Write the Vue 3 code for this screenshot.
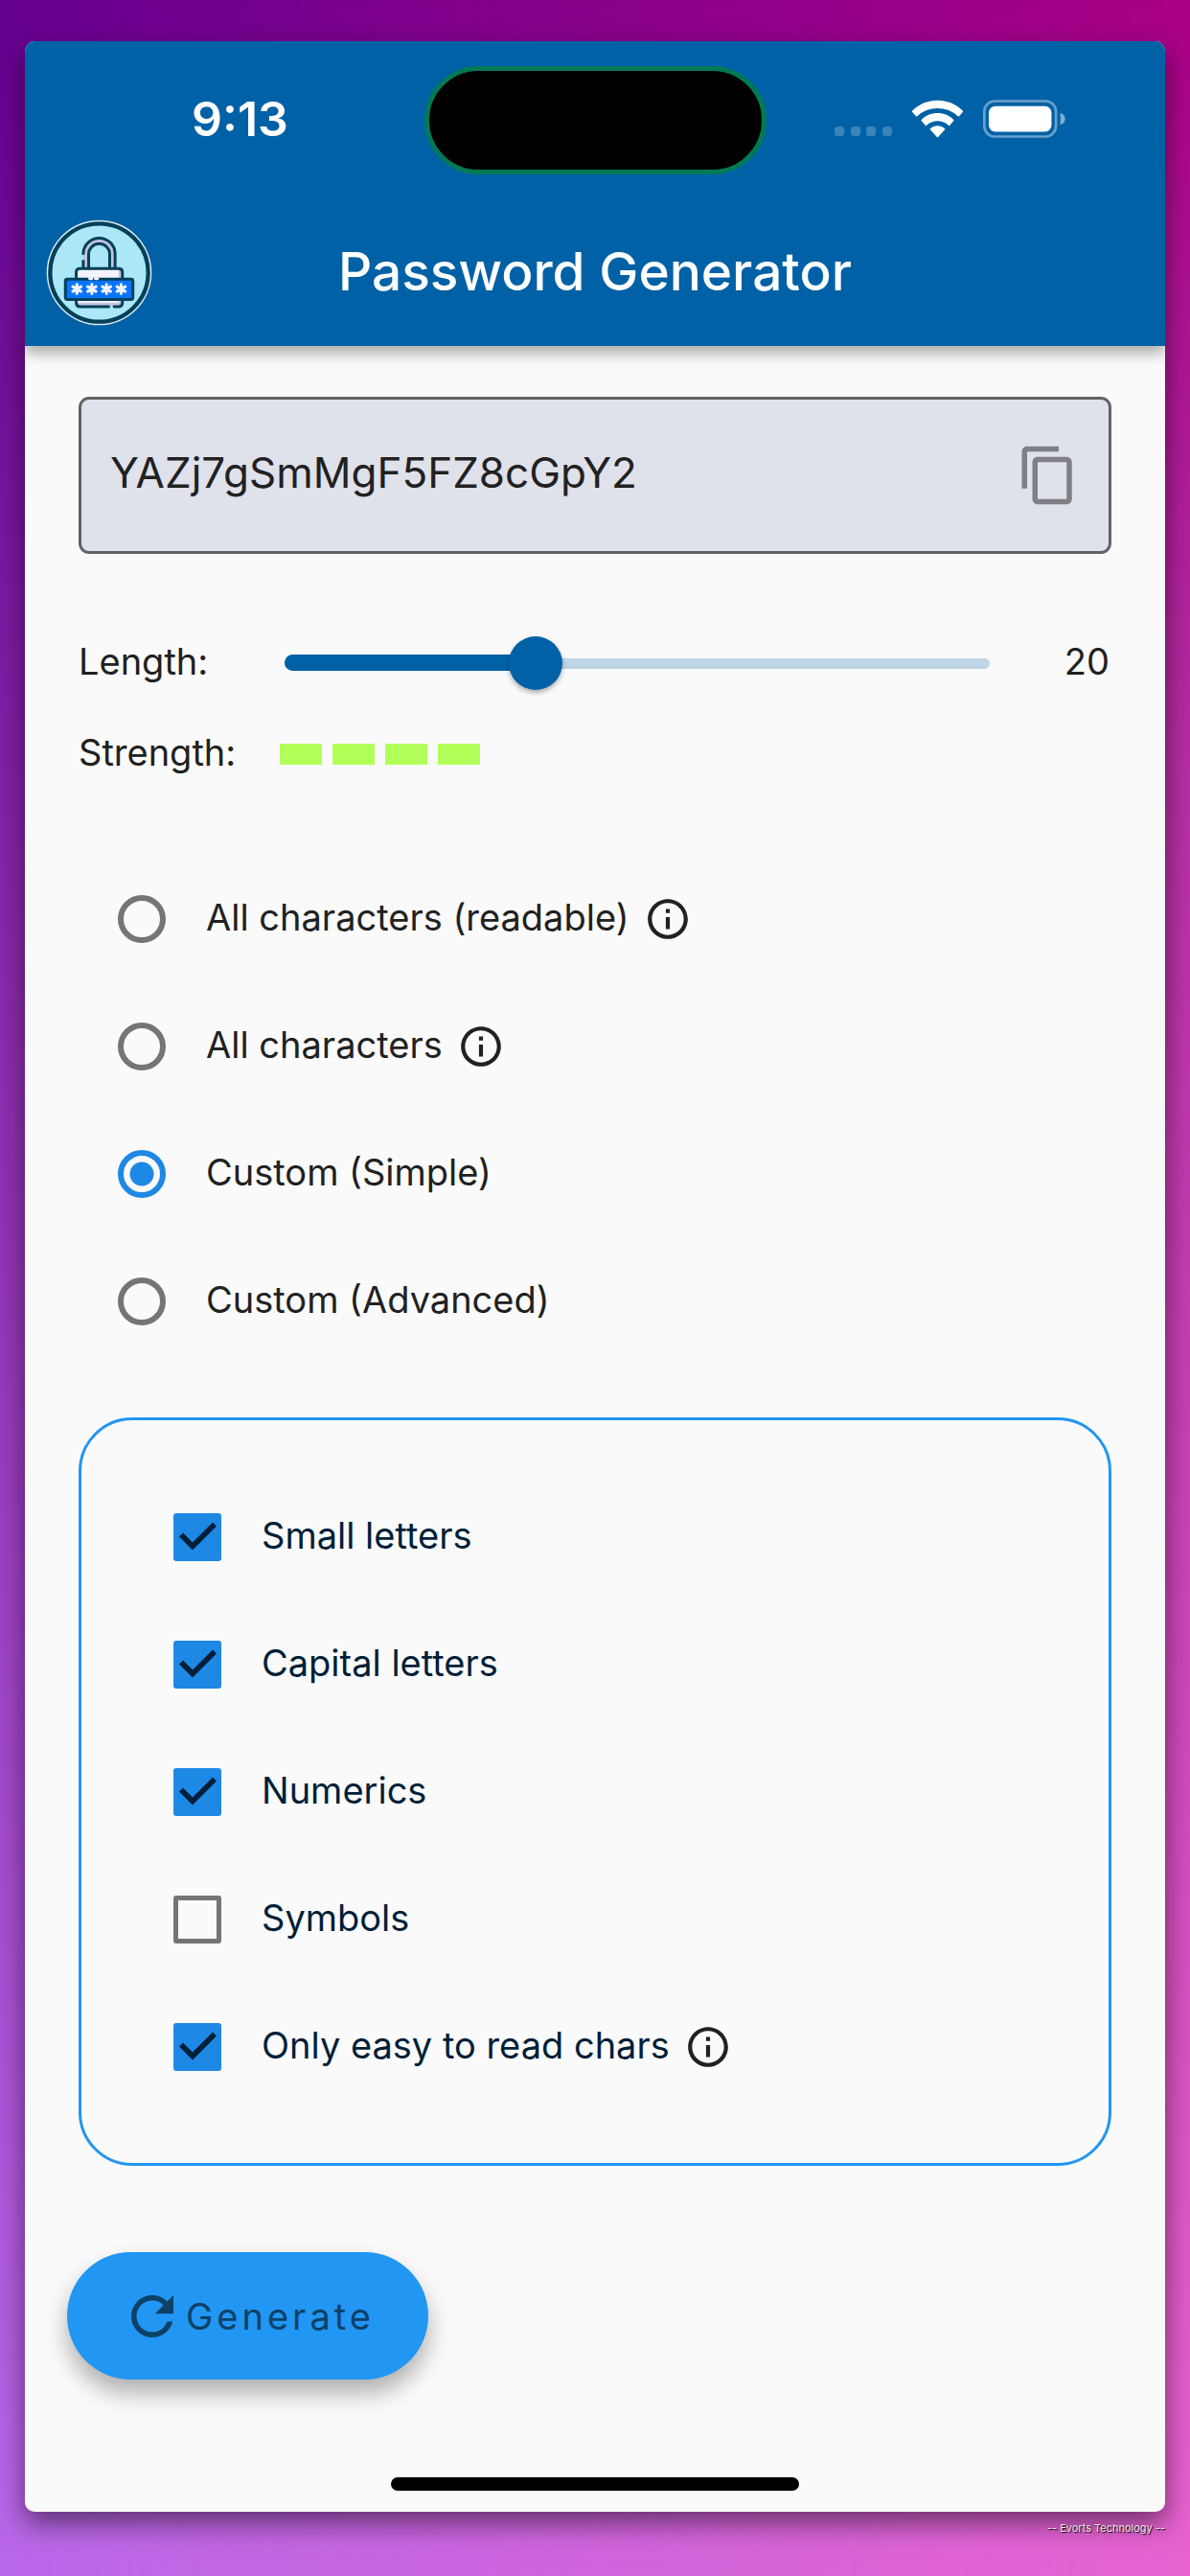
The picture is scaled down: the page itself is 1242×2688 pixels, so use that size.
<script setup>
import { computed, ref } from 'vue'

const password = ref('YAZj7gSmMgF5FZ8cGpY2')
const min = 4
const max = 49
const length = ref(20)
const filled = computed(() => `${((length.value - min) / (max - min)) * 100}%`)

const mode = ref('simple')
const modes = [
  { id: 'readable', label: 'All characters (readable)', info: true },
  { id: 'all', label: 'All characters', info: true },
  { id: 'simple', label: 'Custom (Simple)' },
  { id: 'advanced', label: 'Custom (Advanced)' },
]

const options = ref([
  { id: 'small', label: 'Small letters', on: true },
  { id: 'capital', label: 'Capital letters', on: true },
  { id: 'numerics', label: 'Numerics', on: true },
  { id: 'symbols', label: 'Symbols', on: false },
  { id: 'easy', label: 'Only easy to read chars', on: true, info: true },
])

const stars = [151, 198, 244, 290]

function copy() {
  navigator.clipboard?.writeText(password.value)
}

function generate() {
  let pool = ''
  const [small, capital, numerics, symbols, easy] = options.value.map((o) => o.on)
  if (small) pool += 'abcdefghijklmnopqrstuvwxyz'
  if (capital) pool += 'ABCDEFGHIJKLMNOPQRSTUVWXYZ'
  if (numerics) pool += '0123456789'
  if (symbols) pool += '!@#$%^&*()-_=+'
  if (easy) pool = pool.replace(/[Il1O0o]/g, '')
  if (!pool) return
  password.value = Array.from({ length: length.value }, () => pool[Math.floor(Math.random() * pool.length)]).join('')
}
</script>

<template>
  <div class="backdrop">
    <div class="screen">
      <header class="header">
        <div class="status">
          <span class="time">9:13</span>
          <span class="island"></span>
          <div class="indicators">
            <svg class="dots" viewBox="0 0 60 10" aria-hidden="true">
              <rect x="0" width="10" height="10" rx="3" />
              <rect x="17" width="10" height="10" rx="3" />
              <rect x="33" width="10" height="10" rx="3" />
              <rect x="50" width="10" height="10" rx="3" />
            </svg>
            <svg class="wifi" viewBox="335 68 160 120" aria-hidden="true">
              <path d="M415 70c31 0 59 12 80 33 1 1 1 2 0 3l-12 14c-1 1-3 1-4 0a93 93 0 0 0-128 0c-1 1-3 1-4 0l-12-14c-1-1-1-2 0-3 21-21 49-33 80-33z" />
              <path d="M415 110c20 0 38 8 51 21 1 1 1 2 0 3l-13 15c-1 1-2 1-3 0a51 51 0 0 0-70 0c-1 1-2 1-3 0l-13-15c-1-1-1-2 0-3 13-13 31-21 51-21z" />
              <path d="M415 150c9 0 17 3 23 9 1 1 1 2 0 3l-21 23c-1 1-3 1-4 0l-21-23c-1-1-1-2 0-3 6-6 14-9 23-9z" />
            </svg>
            <svg class="battery" viewBox="558 69 260 120" aria-hidden="true">
              <rect x="562" y="73" width="226" height="112" rx="33" fill="none" stroke="#6aa3cb" stroke-width="8" />
              <rect x="576" y="89" width="198" height="81" rx="21" fill="#fff" />
              <path d="M802 110q15 6 15 19t-15 19z" fill="#7dafd2" />
            </svg>
          </div>
        </div>
        <div class="toolbar">
          <svg class="logo" viewBox="54 54 334 334" role="img" aria-label="Padlock">
            <circle cx="221" cy="221" r="165" fill="#dcebf4" />
            <circle cx="221" cy="221" r="154" fill="#abe7f6" stroke="#044059" stroke-width="13" />
            <g fill="none" stroke-linecap="butt">
              <path d="M179 208v-45a42 42 0 0 1 84 0v45" stroke="#c6c5e3" stroke-width="16" />
              <path d="M171 208v-27M171 165a50 50 0 0 1 100-5v48M188 208v-45a33 33 0 0 1 66 0v45" stroke="#044059" stroke-width="9" />
            </g>
            <rect x="150" y="209" width="144" height="119" rx="9" fill="#f4f4ff" />
            <path d="M282 209h6q6 0 6 8v110h-144v-12h132z" fill="#c6c5e3" />
            <path d="M149 240v-20q0-12 12-12h121q12 0 12 12v20M149 308v8q0 12 12 12h90M268 328h14q12 0 12-12v-8" fill="none" stroke="#044059" stroke-width="9" stroke-linecap="round" />
            <rect x="115" y="241" width="212" height="64" rx="6" fill="#0775ff" stroke="#044059" stroke-width="9" />
            <path d="M191 240h7M209 240h7" stroke="#f4f4ff" stroke-width="9" stroke-linecap="round" />
            <g stroke="#f4f4ff" stroke-width="9" stroke-linecap="round">
              <path v-for="x in stars" :key="x" :d="`M${x} 258v29M${x - 13} 265l26 15M${x + 13} 265l-26 15`" />
            </g>
          </svg>
          <h1 class="title">Password Generator</h1>
        </div>
      </header>

      <main class="content">
        <div class="field">
          <input v-model="password" class="password" type="text" readonly aria-label="Generated password" />
          <button class="copy" type="button" aria-label="Copy password" @click="copy">
            <svg viewBox="0 0 24 24" aria-hidden="true">
              <path d="M16 1H4c-1.1 0-2 .9-2 2v14h2V3h12V1zm3 4H8c-1.1 0-2 .9-2 2v14c0 1.100.9 2 2 2h11c1.100 0 2-.9 2-2V7c0-1.100-.9-2-2-2zm0 16H8V7h11v14z" />
            </svg>
          </button>
        </div>

        <div class="line">
          <label class="caption" for="length">Length:</label>
          <div class="slider">
            <div class="track"><div class="fill" :style="{ width: filled }"></div></div>
            <input id="length" v-model.number="length" type="range" :min="min" :max="max" />
          </div>
          <output class="value" for="length">{{ length }}</output>
        </div>

        <div class="line">
          <span class="caption">Strength:</span>
          <div class="strength" role="img" aria-label="Strength 4">
            <span v-for="n in 4" :key="n" class="bar"></span>
          </div>
        </div>

        <div class="modes" role="radiogroup" aria-label="Character set">
          <div v-for="m in modes" :key="m.id" class="choice">
            <input :id="m.id" v-model="mode" class="radio" type="radio" name="mode" :value="m.id" />
            <label :for="m.id">{{ m.label }}</label>
            <svg v-if="m.info" class="info" viewBox="0 0 24 24" aria-hidden="true">
              <path d="M11 7h2v2h-2zm0 4h2v6h-2zm1-9C6.480 2 2 6.480 2 12s4.480 10 10 10 10-4.480 10-10S17.520 2 12 2zm0 18c-4.410 0-8-3.590-8-8s3.590-8 8-8 8 3.590 8 8-3.590 8-8 8z" />
            </svg>
          </div>
        </div>

        <div class="panel">
          <div v-for="o in options" :key="o.id" class="choice">
            <input :id="o.id" v-model="o.on" class="check" type="checkbox" />
            <label :for="o.id">{{ o.label }}</label>
            <svg v-if="o.info" class="info" viewBox="0 0 24 24" aria-hidden="true">
              <path d="M11 7h2v2h-2zm0 4h2v6h-2zm1-9C6.480 2 2 6.480 2 12s4.480 10 10 10 10-4.480 10-10S17.520 2 12 2zm0 18c-4.410 0-8-3.590-8-8s3.590-8 8-8 8 3.590 8 8-3.590 8-8 8z" />
            </svg>
          </div>
        </div>

        <button class="generate" type="button" @click="generate">
          <svg viewBox="0 0 24 24" aria-hidden="true">
            <path d="M17.650 6.350C16.200 4.900 14.210 4 12 4c-4.420 0-7.990 3.580-7.990 8s3.570 8 7.990 8c3.730 0 6.840-2.550 7.730-6h-2.080c-.82 2.330-3.040 4-5.650 4-3.310 0-6-2.690-6-6s2.690-6 6-6c1.660 0 3.140.69 4.220 1.780L13 11h7V4l-2.350 2.350z" />
          </svg>
          <span>Generate</span>
        </button>
      </main>
      <div class="home"></div>
    </div>
    <footer class="credit">-- Evorts Technology --</footer>
  </div>
</template>

<style>
body {
  margin: 0;
}
</style>

<style scoped>
* {
  box-sizing: border-box;
}

.backdrop {
  position: relative;
  z-index: 0;
  min-height: 100vh;
  padding: 43px 26px 0;
  background: linear-gradient(#66008f, #8c2cae 40%, #b968ea);
  font-family: Inter, "Liberation Sans", sans-serif;
  font-size: 38px;
  color: #212121;
}

.backdrop::before {
  content: "";
  position: absolute;
  inset: 0;
  z-index: -1;
  background: linear-gradient(#a90086, #b62ea4 30%, #e863d0);
  mask-image: linear-gradient(to right, transparent, #000);
}

.screen {
  padding-bottom: 22px;
  border-radius: 10px;
  background: #fafafa;
  box-shadow: 0 12px 28px rgba(0, 0, 0, 0.5);
}

.header {
  height: 318px;
  padding-top: 26px;
  border-radius: 10px 10px 0 0;
  background: #0061a6;
  box-shadow: 0 8px 14px rgba(0, 0, 0, 0.3);
  clip-path: inset(0 0 -30px 0);
  color: #fff;
}

.status,
.toolbar {
  display: grid;
  grid-template-columns: 1fr auto 1fr;
  align-items: center;
}

.time {
  padding: 0 0 4px 174px;
  font-size: 50px;
  line-height: 60px;
  font-weight: 600;
}

.island {
  width: 357px;
  height: 113px;
  border: 5px solid #007a55;
  border-radius: 57px;
  background: #000;
}

.indicators {
  display: flex;
  align-items: center;
  justify-content: flex-end;
  gap: 21px;
  padding: 0 104px 4px 0;
}

.dots {
  width: 60px;
  height: 10px;
  margin-top: 26px;
  fill: #3a84b9;
}

.wifi {
  width: 53px;
  height: 40px;
  fill: #fff;
}

.battery {
  width: 86px;
  height: 40px;
}

.toolbar {
  height: 153px;
  margin-top: 26px;
}

.logo {
  width: 111px;
  height: 111px;
  margin-left: 22px;
}

.title {
  margin: 0;
  padding-bottom: 4px;
  font-size: 55px;
  line-height: 66px;
  font-weight: 500;
}

.content {
  padding: 53px 56px 0;
}

.field {
  display: flex;
  align-items: center;
  height: 164px;
  padding: 0 30px;
  border: 3px solid #606368;
  border-radius: 11px;
  background: #dfe1eb;
}

.password {
  flex: 1;
  min-width: 0;
  padding: 0 0 6px;
  border: 0;
  outline: 0;
  background: none;
  font: inherit;
  font-size: 44px;
  color: inherit;
}

.copy {
  width: 66px;
  height: 66px;
  padding: 0;
  border: 0;
  background: none;
  fill: #7f8084;
}

.copy svg {
  display: block;
}

.line {
  display: flex;
  align-items: center;
  height: 95px;
}

.field + .line {
  margin-top: 66px;
}

.caption,
.value,
.choice label {
  padding-bottom: 3px;
}

.caption {
  width: 187px;
}

.slider {
  position: relative;
  flex: 1;
  height: 56px;
}

.track {
  position: absolute;
  inset: 0 28px;
  display: flex;
  align-items: center;
}

.track::before {
  content: "";
  position: absolute;
  inset: 23px 0 22px;
  border-radius: 6px;
  background: #bed5e5;
}

.fill {
  position: relative;
  height: 17px;
  border-radius: 9px;
  background: #0061a6;
}

.slider input {
  position: absolute;
  inset: 0;
  width: 100%;
  height: 56px;
  margin: 0;
  appearance: none;
  background: none;
}

.slider input::-webkit-slider-thumb {
  width: 56px;
  height: 56px;
  border-radius: 50%;
  appearance: none;
  background: #0061a6;
  box-shadow: 0 3px 5px rgba(0, 0, 0, 0.3);
}

.value {
  width: 99px;
  padding-right: 2px;
  text-align: right;
}

.strength {
  display: flex;
  gap: 11px;
  padding-left: 23px;
}

.bar {
  width: 44px;
  height: 22px;
  background: #b2ff59;
}

.modes {
  margin-top: 58px;
  padding-left: 41px;
}

.panel {
  margin-top: 55px;
  padding: 55px 0 55px 96px;
  border: 3px solid #2196f3;
  border-radius: 56px;
  color: #001f38;
}

.choice {
  display: flex;
  align-items: center;
  height: 133px;
}

.radio,
.check {
  flex: none;
  width: 50px;
  height: 50px;
  margin: 0 42px 0 0;
  border: 6px solid #757575;
  appearance: none;
}

.radio {
  border-radius: 50%;
}

.radio:checked {
  border-color: #1e88e5;
  background: radial-gradient(circle, #1e88e5 12px, transparent 13px);
}

.check {
  border-width: 5px;
  border-radius: 3px;
}

.check:checked {
  border: 0;
  background: #1e88e5;
}

.check:checked::before {
  content: "";
  display: block;
  height: 50px;
  background: #001f38;
  clip-path: polygon(6px 25px, 10px 21px, 20px 31px, 41px 10px, 45px 14px, 20px 39px);
}

.info {
  width: 50px;
  height: 50px;
  margin-left: 15px;
  fill: #212121;
}

.generate {
  display: flex;
  align-items: center;
  height: 133px;
  margin: 90px 0 0 -12px;
  padding: 0 56px;
  border: 0;
  border-radius: 67px;
  background: #2196f3;
  box-shadow: 0 14px 24px rgba(0, 0, 0, 0.3);
  font: inherit;
  letter-spacing: 4px;
  color: #0d4167;
}

.generate svg {
  width: 66px;
  height: 66px;
  margin-right: 2px;
  fill: currentColor;
}

.home {
  width: 426px;
  height: 14px;
  margin: 102px auto 0;
  border-radius: 7px;
  background: #000;
}

.credit {
  height: 67px;
  padding-top: 10px;
  font-size: 11px;
  line-height: 14px;
  text-align: right;
  color: #f0e4ee;
  text-shadow: 1px 1px 1px #000;
}
</style>
